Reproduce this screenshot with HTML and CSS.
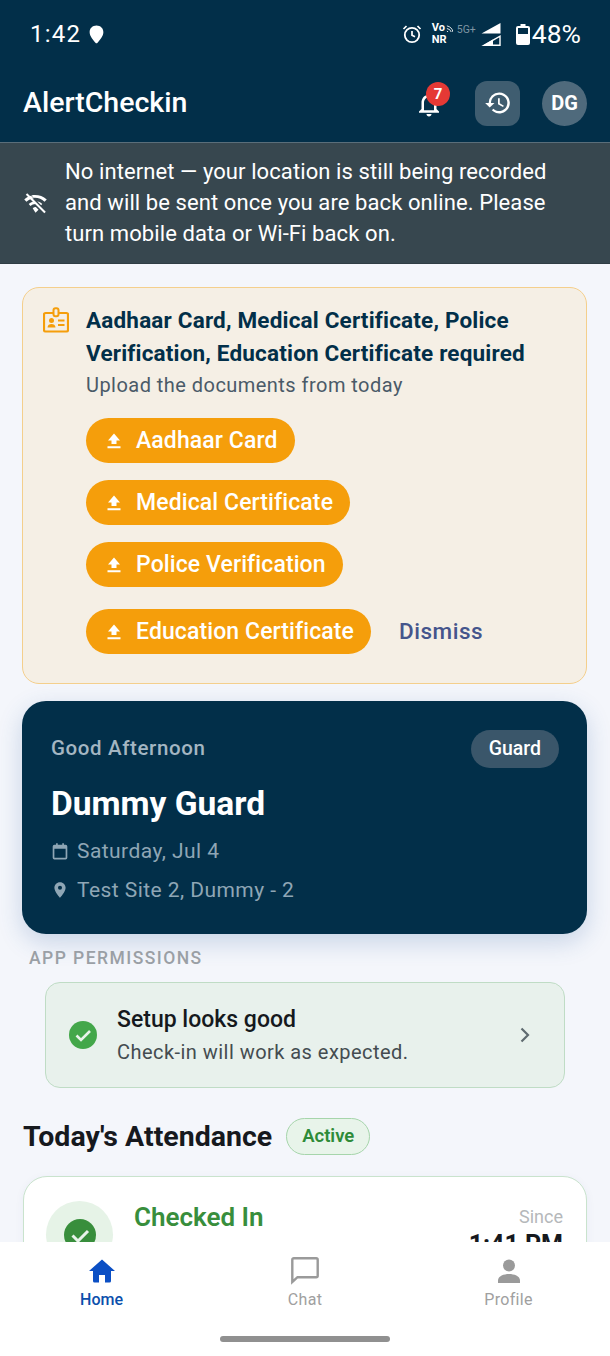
FILE: index.html
```html
<!DOCTYPE html>
<html lang="en">
<head>
<meta charset="utf-8">
<title>AlertCheckin</title>
<link rel="stylesheet" href="styles.css">
</head>
<body>
<div class="app">
  <header class="top">
    <div class="status">
      <div class="status-left">
        <span class="time">1:42</span>
        <svg class="pin" viewBox="0 0 14 18"><path d="M7 .5C3.2.5.5 3.2.5 6.8c0 3.6 3.4 7.6 5.5 10 .6.7 1.4.7 2 0 2.100-2.400 5.500-6.400 5.500-10C13.500 3.200 10.800.5 7 .5z" fill="#fff"/></svg>
      </div>
      <div class="status-right">
        <svg class="alarm" viewBox="0 0 20 20"><circle cx="10" cy="11" r="7.200" fill="none" stroke="#fff" stroke-width="1.800"/><path d="M10 7v4.300l3 1.500M1.500 5l3-3M18.500 5l-3-3" fill="none" stroke="#fff" stroke-width="1.700"/></svg>
        <span class="volte"><span class="vo">Vo<svg class="waves" viewBox="0 0 8 8"><path d="M1 7a3 3 0 0 1 2 2M1 4a6 6 0 0 1 5 4M1 1a9 9 0 0 1 7 7" fill="none" stroke="#fff" stroke-width="1"/></svg></span><span>NR</span></span>
        <span class="net">5G+</span>
        <svg class="signal" viewBox="0 0 20 24"><path d="M19.500 1v10.500H.5z" fill="#fff"/><path d="M19 14.200V23.300H3z" fill="none" stroke="#fff" stroke-width="1.400"/><path d="M12 17.500v6H2z" fill="#fff"/></svg>
        <svg class="battery" viewBox="0 0 14 21"><path d="M4.500 0h5v2H12a2 2 0 0 1 2 2v15a2 2 0 0 1-2 2H2a2 2 0 0 1-2-2V4a2 2 0 0 1 2-2h2.500z" fill="#fff"/><rect x="2" y="4" width="10" height="6" fill="#022f49"/></svg>
        <span class="pct">48%</span>
      </div>
    </div>
    <div class="appbar">
      <span class="brand">AlertCheckin</span>
      <div class="actions">
        <div class="bell">
          <svg viewBox="0 0 24 24"><path d="M12 22c1.100 0 2-.9 2-2h-4c0 1.100.9 2 2 2zm6-6v-5c0-3.100-1.600-5.600-4.500-6.300V4c0-.8-.7-1.500-1.500-1.500s-1.500.7-1.500 1.500v.7C7.600 5.400 6 7.900 6 11v5l-2 2v1h16v-1zm-2 1H8v-6c0-2.500 1.500-4.500 4-4.500s4 2 4 4.500z" fill="#fff"/></svg>
          <span class="badge">7</span>
        </div>
        <div class="history">
          <svg viewBox="0 0 24 24"><path d="M13 3a9 9 0 0 0-9 9H1l3.900 3.900L9 12H6a7 7 0 1 1 2.100 4.900l-1.400 1.400A9 9 0 1 0 13 3zm-1 5v5l4.300 2.500.7-1.200-3.500-2.100V8z" fill="#fff"/></svg>
        </div>
        <div class="avatar">DG</div>
      </div>
    </div>
  </header>

  <div class="offline">
    <svg class="wifi" viewBox="0 0 24 24"><path d="M2 8.500c2-1.800 4-2.800 6-3.300l2.400 2.400C8 7.800 5.700 8.800 4 10.500zM22 8.500l-2 2c-2.600-2.600-6-3.800-9.500-3.500L8.300 4.800C13 3.900 18.300 5 22 8.500zM6 12.500c1.100-1.100 2.500-1.900 4-2.300l2.300 2.300c-1.800-.1-3.500.6-4.800 1.800zM18 12.500l-1 1-3.500-3.500c1.700.3 3.200 1.200 4.500 2.500zM9.500 16.300c.8-.8 1.700-1.200 2.800-1.200l2.400 2.400-2.700 2.700z" fill="#fff"/><path d="M4 3.500l16.500 16.500" stroke="#fff" stroke-width="1.800"/></svg>
    <p class="offline-text">No internet — your location is still being recorded and will be sent once you are back online. Please turn mobile data or Wi-Fi back on.</p>
  </div>

  <main class="content">
    <section class="alert">
      <svg class="id-icon" viewBox="0 0 26 26"><rect x="1" y="6" width="24" height="18.500" rx="1.500" fill="none" stroke="#f59e0b" stroke-width="2.200"/><rect x="10.500" y="1.200" width="5" height="8" rx="2" fill="#f5efe5" stroke="#f59e0b" stroke-width="2"/><circle cx="8.500" cy="13.500" r="2.500" fill="#f59e0b"/><path d="M4.500 20.500c0-2.500 2-3.500 4-3.500s4 1 4 3.500z" fill="#f59e0b"/><path d="M15 13.500h6.500M15 18h6.500" stroke="#f59e0b" stroke-width="2.200"/></svg>
      <div class="alert-body">
        <h2 class="alert-title">Aadhaar Card, Medical Certificate, Police Verification, Education Certificate required</h2>
        <p class="alert-sub">Upload the documents from today</p>
        <div class="uploads">
          <button class="upload"><svg viewBox="0 0 18 18"><path d="M9 1.500 3 8.500h3.500V12h5V8.500H15zM2.500 14.300h13v1.900h-13z" fill="#fff"/></svg>Aadhaar Card</button>
          <button class="upload"><svg viewBox="0 0 18 18"><path d="M9 1.500 3 8.500h3.500V12h5V8.500H15zM2.500 14.300h13v1.900h-13z" fill="#fff"/></svg>Medical Certificate</button>
          <button class="upload"><svg viewBox="0 0 18 18"><path d="M9 1.500 3 8.500h3.500V12h5V8.500H15zM2.500 14.300h13v1.900h-13z" fill="#fff"/></svg>Police Verification</button>
          <div class="upload-last">
            <button class="upload"><svg viewBox="0 0 18 18"><path d="M9 1.500 3 8.500h3.500V12h5V8.500H15zM2.500 14.300h13v1.900h-13z" fill="#fff"/></svg>Education Certificate</button>
            <span class="dismiss">Dismiss</span>
          </div>
        </div>
      </div>
    </section>

    <section class="greeting">
      <div class="greet-top">
        <span class="greet-hello">Good Afternoon</span>
        <span class="role">Guard</span>
      </div>
      <h1 class="greet-name">Dummy Guard</h1>
      <div class="meta meta-date">
        <svg viewBox="0 0 16 16"><path d="M3 2.500h1.500V1H6v1.500h4V1h1.500v1.500H13A1.500 1.500 0 0 1 14.500 4v10a1.500 1.500 0 0 1-1.500 1.500H3A1.500 1.500 0 0 1 1.500 14V4A1.500 1.500 0 0 1 3 2.500zM3 6v8h10V6z" fill="#8fa6b5"/></svg>
        <span>Saturday, Jul 4</span>
      </div>
      <div class="meta">
        <svg viewBox="0 0 16 16"><path d="M8 1C5.100 1 3 3.200 3 6c0 3.500 5 9 5 9s5-5.500 5-9c0-2.800-2.100-5-5-5zm0 6.800A1.800 1.800 0 1 1 8 4.200a1.800 1.800 0 0 1 0 3.600z" fill="#8fa6b5"/></svg>
        <span>Test Site 2, Dummy - 2</span>
      </div>
    </section>

    <div class="perm-label">APP PERMISSIONS</div>
    <section class="setup">
      <svg class="setup-check" viewBox="0 0 28 28"><circle cx="14" cy="14" r="14" fill="#43a74a"/><path d="M7.500 14.500l4.500 4.500 9-9" fill="none" stroke="#e8f3ea" stroke-width="2.600"/></svg>
      <div class="setup-text">
        <div class="setup-title">Setup looks good</div>
        <div class="setup-sub">Check-in will work as expected.</div>
      </div>
      <svg class="chev" viewBox="0 0 12 18"><path d="M2.500 2.500 9 9l-6.500 6.500" fill="none" stroke="#5f6b70" stroke-width="2.200"/></svg>
    </section>

    <div class="today">
      <h2 class="today-title">Today's Attendance</h2>
      <span class="active">Active</span>
    </div>
    <section class="attend">
      <div class="attend-icon">
        <svg viewBox="0 0 32 32"><circle cx="16" cy="16" r="16" fill="#388e3c"/><path d="M8.500 16.500l5.500 5.500 10-10" fill="none" stroke="#e8f3ea" stroke-width="3"/></svg>
      </div>
      <div class="attend-state">Checked In</div>
      <div class="attend-time">
        <span class="since">Since</span>
        <span class="clock">1:41 PM</span>
      </div>
    </section>
  </main>

  <nav class="tabs">
    <div class="tab-row">
      <div class="tab tab-on">
        <svg viewBox="0 0 28 28"><path d="M14 2.500 1 14h4v10a1.500 1.500 0 0 0 1.500 1.500H11V18h6v7.500h4.500A1.500 1.500 0 0 0 23 24V14h4z" fill="#0b4fc4"/></svg>
        <span>Home</span>
      </div>
      <div class="tab">
        <svg viewBox="0 0 28 28"><path d="M2.800 1.200h22.400a1.500 1.500 0 0 1 1.500 1.500v16a1.500 1.500 0 0 1-1.500 1.500H6.500l-5.200 4.800V2.700a1.500 1.500 0 0 1 1.500-1.500z" fill="none" stroke="#9a9a9a" stroke-width="2.400"/></svg>
        <span>Chat</span>
      </div>
      <div class="tab">
        <svg viewBox="0 0 28 28"><circle cx="14" cy="8.500" r="6" fill="#9a9a9a"/><path d="M3 26v-2.500C3 19 9 17 14 17s11 2 11 6.500V26z" fill="#9a9a9a"/></svg>
        <span>Profile</span>
      </div>
    </div>
    <div class="home-bar"></div>
  </nav>
</div>
</body>
</html>
```

FILE: styles.css
```css
* { box-sizing: border-box; }
html, body { margin: 0; padding: 0; }
body { font-family: Roboto, "Liberation Sans", sans-serif; background: #f4f6fb; }
h1, h2, p { margin: 0; }
svg { display: block; flex: none; }

.app { width: 610px; height: 1356px; display: flex; flex-direction: column; overflow: hidden; }

.top { height: 142px; flex: none; background: #022f49; color: #fff; }
.status { height: 68px; padding: 21px 29px 0 30px; display: flex; justify-content: space-between; align-items: flex-start; }
.status-left { display: flex; align-items: center; gap: 8px; height: 26px; }
.time { font-size: 24px; letter-spacing: 1.200px; line-height: 26px; }
.pin { width: 15px; height: 19px; }
.status-right { display: flex; align-items: center; height: 26px; }
.alarm { width: 20px; height: 20px; margin-right: 10px; }
.volte { display: flex; flex-direction: column; font-size: 11px; font-weight: 700; line-height: 12px; width: 20px; margin-right: 5px; }
.vo { display: flex; align-items: center; gap: 1px; }
.waves { width: 7px; height: 7px; }
.net { font-size: 10.500px; color: #7f95a3; width: 24px; margin: -9px 0 0 0; }
.signal { width: 20px; height: 24px; margin-right: 15px; }
.battery { width: 14px; height: 21px; margin-right: 2px; }
.pct { font-size: 26.500px; line-height: 26px; }

.appbar { height: 74px; padding: 0 23px 4px; display: flex; justify-content: space-between; align-items: center; }
.brand { font-size: 28.500px; font-weight: 500; margin-top: -2px; }
.actions { display: flex; align-items: center; }
.bell { position: relative; width: 32px; height: 32px; margin-right: 29px; padding-top: 2px; }
.bell svg { width: 30px; height: 30px; }
.badge { position: absolute; top: -5px; left: 12px; width: 24px; height: 24px; border-radius: 50%; background: #e53935; color: #fff; font-size: 15px; font-weight: 700; text-align: center; line-height: 24px; }
.history { width: 45px; height: 45px; border-radius: 12px; background: #3f5d70; display: flex; align-items: center; justify-content: center; margin-right: 22px; }
.history svg { width: 28px; height: 28px; }
.avatar { width: 45px; height: 45px; border-radius: 50%; background: #4f6a7c; color: #fff; font-size: 20px; font-weight: 700; text-align: center; line-height: 45px; }

.offline { height: 122px; flex: none; background: #37474f; border-top: 1px solid #5a6e7a; border-bottom: 1px solid #2f3d44; display: flex; align-items: center; padding: 0 22px; gap: 16px; }
.wifi { width: 27px; height: 27px; }
.offline-text { font-size: 22px; line-height: 31px; letter-spacing: .09px; color: #fff; width: 505px; margin-top: -1px; }

.content { flex: 1; min-height: 0; overflow: hidden; padding: 23px 23px 0 22px; }

.alert { height: 397px; border: 1px solid #f4cf8c; border-radius: 17px; background: #f5efe5; padding: 19px 20px 0 20px; display: flex; gap: 17px; }
.id-icon { width: 26px; height: 26px; }
.alert-body { flex: 1; min-width: 0; margin-top: 1px; }
.alert-title { font-size: 22.500px; line-height: 32.500px; font-weight: 700; letter-spacing: .18px; color: #022f49; margin-top: -4px; }
.alert-sub { font-size: 20px; line-height: 33px; color: #4a5a68; letter-spacing: .46px; }
.uploads { display: flex; flex-direction: column; align-items: flex-start; gap: 17px; margin-top: 16px; }
.upload-last { display: flex; align-items: center; gap: 28px; margin-top: 5px; }
.upload { height: 45px; border: 0; border-radius: 23px; background: #f59e0b; color: #fff; font-family: inherit; font-size: 23px; font-weight: 500; letter-spacing: .1px; padding: 0 17px 0 19px; display: flex; align-items: center; gap: 13px; }
.upload svg { width: 18px; height: 18px; }
.dismiss { font-size: 22.500px; font-weight: 500; letter-spacing: .5px; color: #45558c; margin-top: -2px; }

.greeting { margin-top: 17px; height: 233px; border-radius: 24px; background: #022f49; padding: 29px 28px 0 29px; box-shadow: 0 8px 24px rgba(40, 90, 160, .22); }
.greet-top { display: flex; justify-content: space-between; align-items: center; height: 38px; }
.greet-hello { font-size: 20.500px; font-weight: 500; letter-spacing: .62px; color: #a4b6c2; margin-top: -2px; }
.role { height: 38px; line-height: 38px; padding: 0 18px; border-radius: 19px; background: #3a566a; color: #fff; font-size: 19.500px; font-weight: 500; }
.greet-name { font-size: 33.500px; font-weight: 700; color: #fff; line-height: 40px; margin-top: 16px; }
.meta { display: flex; align-items: center; gap: 8px; color: #8fa6b5; font-size: 21px; letter-spacing: .44px; line-height: 28px; margin-top: 11px; }
.meta-date { margin-top: 13px; }
.meta svg { width: 18px; height: 18px; }

.perm-label { font-size: 17.500px; font-weight: 500; letter-spacing: 1.450px; color: #9a9fa5; margin: 14px 0 0 7px; line-height: 21px; }
.setup { height: 106px; margin: 13px 22px 0 23px; border: 1px solid #bfdcc5; border-radius: 15px; background: #e8f1ec; display: flex; align-items: center; padding: 0 33px 0 23px; }
.setup-check { width: 28px; height: 28px; margin-right: 20px; }
.setup-text { flex: 1; padding-top: 2px; }
.setup-title { font-size: 23px; font-weight: 500; color: #15191d; line-height: 33px; }
.setup-sub { font-size: 20px; color: #444c50; line-height: 33px; letter-spacing: .46px; }
.chev { width: 12px; height: 18px; }

.today { display: flex; align-items: center; gap: 14px; margin-top: 30px; height: 37px; }
.today-title { font-size: 28.500px; font-weight: 700; color: #16191e; margin-left: 1px; }
.active { height: 37px; line-height: 35px; padding: 0 15px; border-radius: 19px; border: 1px solid #a6d5ab; background: #e8f4ea; color: #2e8b38; font-size: 18.500px; font-weight: 600; }

.attend { margin-top: 21px; margin-left: 1px; height: 180px; border: 1px solid #c9e3cd; border-radius: 24px; background: #fff; padding: 24px 23px 0 22px; display: flex; gap: 21px; box-shadow: 0 2px 10px rgba(30, 60, 120, .05); }
.attend-icon { width: 67px; height: 67px; border-radius: 50%; background: #e6f3e7; display: flex; align-items: center; justify-content: center; flex: none; }
.attend-icon svg { width: 32px; height: 32px; }
.attend-state { flex: 1; font-size: 26px; font-weight: 600; color: #388e3c; line-height: 32px; }
.attend-time { display: flex; flex-direction: column; align-items: flex-end; }
.since { font-size: 18px; color: #b5b8ba; line-height: 32px; }
.clock { font-size: 25px; font-weight: 700; color: #16191e; line-height: 34px; margin-top: -5px; }

.tabs { height: 114px; flex: none; background: #fff; display: flex; flex-direction: column; align-items: center; }
.tab-row { width: 100%; display: grid; grid-template-columns: 203px 204px 203px; padding-top: 15px; }
.tab { display: flex; flex-direction: column; align-items: center; color: #a0a0a0; font-size: 16px; line-height: 22px; letter-spacing: .3px; }
.tab svg { width: 28px; height: 28px; margin-bottom: 4px; }
.tab-on { color: #0b4fac; font-weight: 500; letter-spacing: 0; }
.home-bar { width: 170px; height: 6px; border-radius: 3px; background: #909090; margin-top: 25px; }
```
